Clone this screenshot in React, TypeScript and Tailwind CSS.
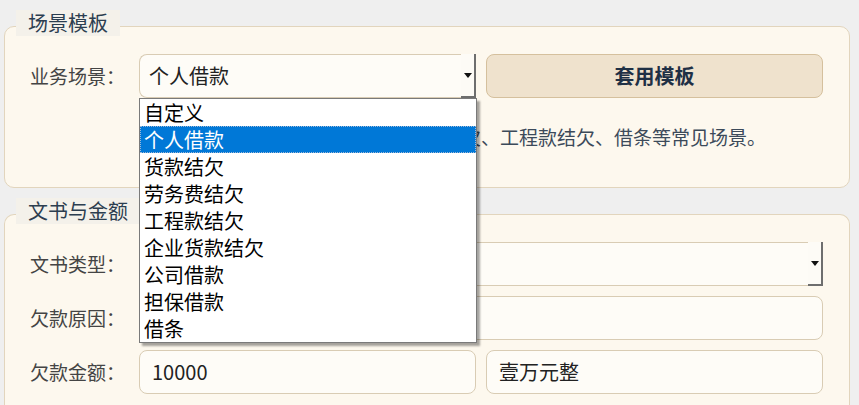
import React from 'react';

const scenes = ['自定义', '个人借款', '货款结欠', '劳务费结欠', '工程款结欠', '企业货款结欠', '公司借款', '担保借款', '借条'];

function Legend({ text }: { text: string }) {
  return (
    <div className="relative z-10 -mb-[10px] ml-[12px] block h-[26px] w-fit bg-[#f4f1ea] px-[12px] text-[20px] leading-[26px] text-[#2c3e50]">
      {text}
    </div>
  );
}

// looks like the native windows select with its little 3d button
function FakeSelect({ value, open }: { value: string; open?: boolean }) {
  return (
    <div className="relative flex h-[44px] items-stretch rounded-l-[8px] border border-r-0 border-[#d9ccb4] bg-[#fefcf7]">
      <div className="flex flex-1 items-center pl-[9px] text-[20px] text-[#222]">{value}</div>
      <div className="-my-px flex w-[15px] items-center justify-center border-r-2 border-b-2 border-r-[#6e6e6e] border-b-[#6e6e6e] bg-[#fdfbf6]">
        <svg width="8" height="5" viewBox="0 0 8 5">
          <path d="M0 0h8L4 5z" fill="#111" />
        </svg>
      </div>
      {open && (
        <div className="absolute left-[-1px] top-[43px] z-20 w-[338px] border border-[#7a7a7a] bg-white shadow-[3px_3px_2px_rgba(0,0,0,0.35)]">
          {scenes.map((s) => (
            <div
              key={s}
              className={
                s === '个人借款'
                  ? 'h-[27px] border border-dotted border-[#9fb8d8] bg-[#0078d7] pl-[3px] text-[20px] leading-[25px] text-white'
                  : 'h-[27px] pl-[4px] text-[20px] leading-[27px] text-black'
              }
            >
              {s}
            </div>
          ))}
        </div>
      )}
    </div>
  );
}

function Input({ value }: { value?: string }) {
  return (
    <div className="flex h-[44px] items-center rounded-[8px] border border-[#d9ccb4] bg-[#fefcf7] pl-[12px] text-[20px] text-[#222]">
      {value}
    </div>
  );
}

function Label({ text }: { text: string }) {
  return <div className="flex h-[44px] items-center text-[19px] text-[#444]">{text}</div>;
}

export default function App() {
  return (
    <div className="min-h-[405px] bg-[#efefef] pl-[4px] pr-[9px] pt-[10px] font-['Noto_Sans_CJK_SC','Noto_Sans',sans-serif]">
      <Legend text="场景模板" />
      <div className="rounded-[10px] border border-[#e2d5bd] bg-[#fdf8ee] pb-[37px] pl-[25px] pr-[26px] pt-[27px]">
        <div className="grid grid-cols-[99px_337px_337px] gap-x-[10px]">
          <Label text="业务场景：" />
          <FakeSelect value="个人借款" open />
          <button className="h-[44px] rounded-[8px] border border-[#d5c09d] bg-[#efe2cd] text-[20px] font-bold text-[#1f3045]">
            套用模板
          </button>
          <div className="col-span-2 col-start-2 mt-[26px] h-[26px] text-[19px] leading-[26px] text-[#3c4a5a]">
            适用于个人借款、货款结欠、劳务费结欠、工程款结欠、借条等常见场景。
          </div>
        </div>
      </div>

      <div className="h-[10px]" />
      <Legend text="文书与金额" />
      <div className="rounded-t-[10px] border border-b-0 border-[#e2d5bd] bg-[#fdf8ee] pb-[20px] pl-[25px] pr-[26px] pt-[27px]">
        <div className="grid grid-cols-[99px_337px_337px] gap-x-[10px] gap-y-[10px]">
          <Label text="文书类型：" />
          <div className="col-span-2">
            <FakeSelect value="" />
          </div>
          <Label text="欠款原因：" />
          <div className="col-span-2">
            <Input />
          </div>
          <Label text="欠款金额：" />
          <Input value="10000" />
          <Input value="壹万元整" />
        </div>
      </div>
    </div>
  );
}
